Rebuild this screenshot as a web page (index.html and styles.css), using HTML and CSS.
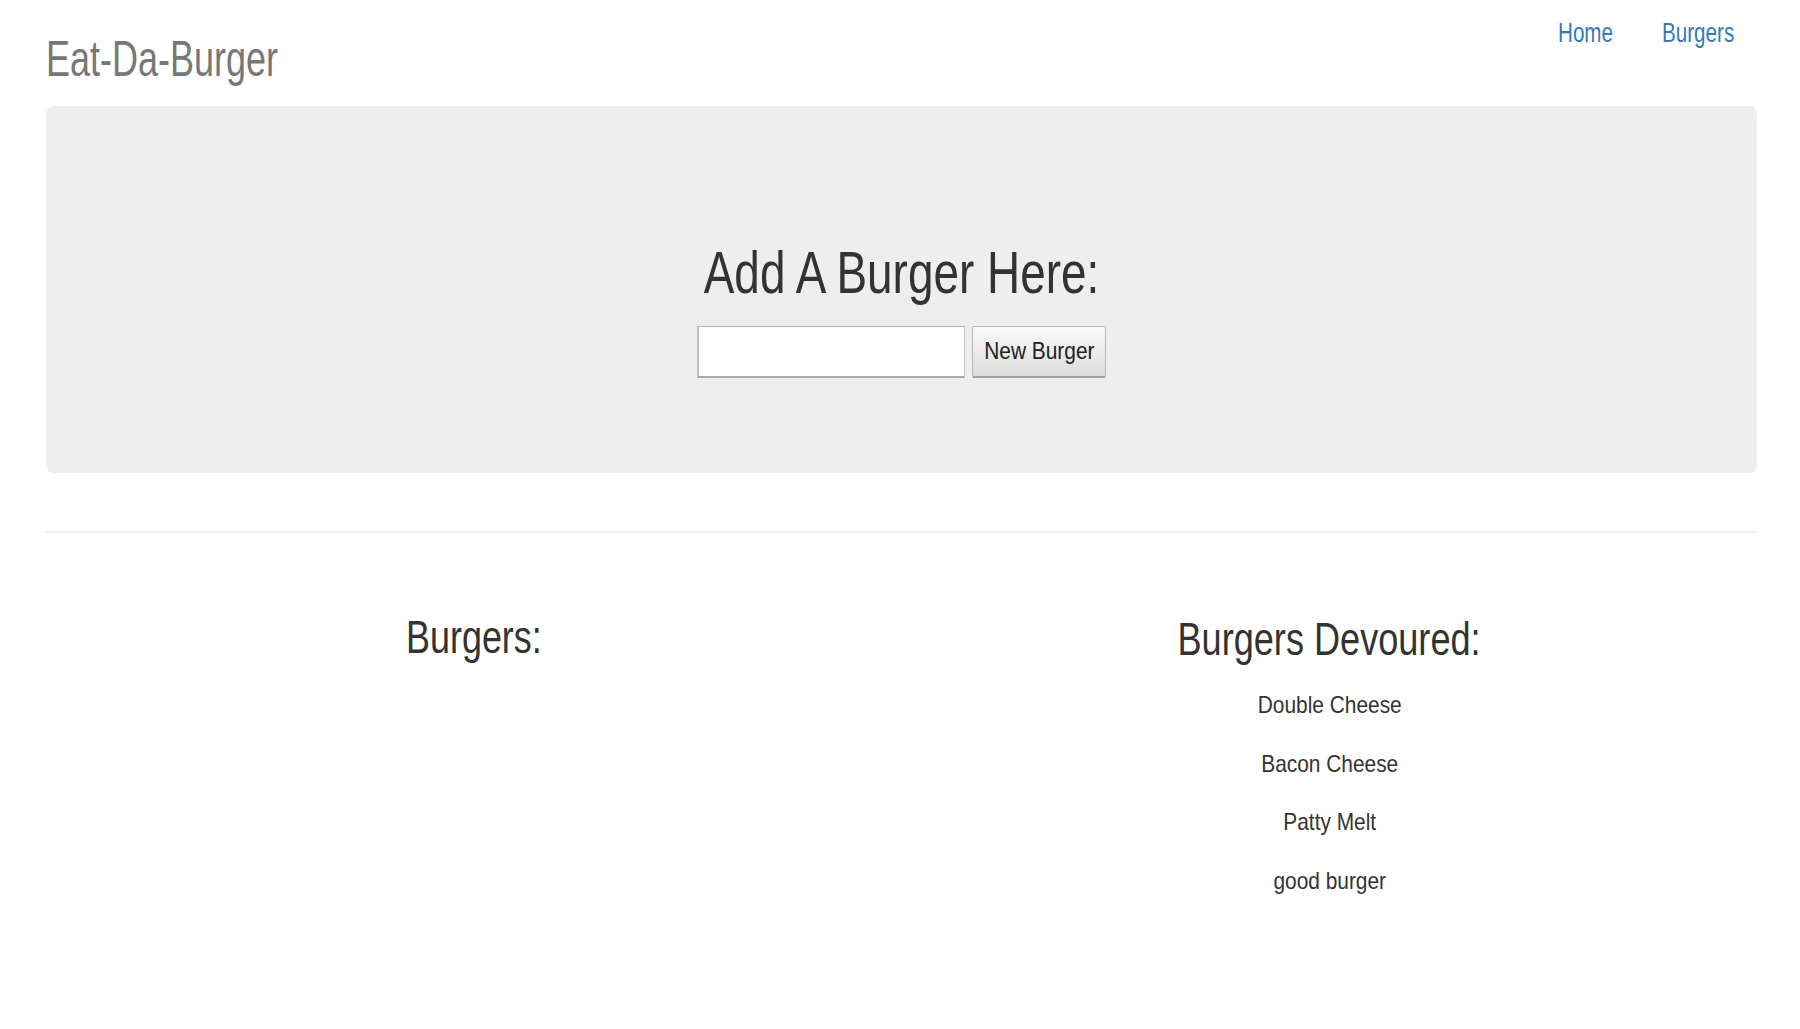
FILE: index.html
```html
<!DOCTYPE html>
<html lang="en">
<head>
<meta charset="utf-8">
<title>Eat-Da-Burger</title>
<link rel="stylesheet" href="styles.css">
</head>
<body>
<div class="container">
  <header class="header">
    <div class="brand"><span class="squeeze-l">Eat-Da-Burger</span></div>
    <nav class="nav">
      <a class="nav-link home" href="#"><span class="squeeze-l">Home</span></a>
      <a class="nav-link burgers" href="#"><span class="squeeze-l">Burgers</span></a>
    </nav>
  </header>

  <section class="jumbotron">
    <h1 class="jumbo-title"><span class="squeeze-c">Add A Burger Here:</span></h1>
    <form class="add-form">
      <input class="burger-input" type="text">
      <button class="burger-btn" type="button"><span class="squeeze-btn">New Burger</span></button>
    </form>
  </section>

  <hr class="divider">

  <div class="columns">
    <div class="col">
      <h2 class="col-title"><span class="squeeze-c">Burgers:</span></h2>
    </div>
    <div class="col">
      <h2 class="col-title devoured"><span class="squeeze-c">Burgers Devoured:</span></h2>
      <ul class="burger-list">
        <li>Double Cheese</li>
        <li>Bacon Cheese</li>
        <li>Patty Melt</li>
        <li>good burger</li>
      </ul>
    </div>
  </div>
</div>
</body>
</html>
```

FILE: styles.css
```css
* { box-sizing: border-box; }

body {
  margin: 0;
  background: #ffffff;
  color: #333333;
  font-family: "Liberation Sans", Arial, sans-serif;
}

.container {
  padding: 0 43px 0 46px;
}

.header {
  display: flex;
  justify-content: space-between;
  align-items: flex-start;
  height: 106px;
}

.brand {
  width: 232px;
  margin-top: 34px;
  font-size: 50px;
  line-height: 50px;
  color: #777777;
  white-space: nowrap;
}

.brand .squeeze-l { transform: scaleX(0.72); }

.squeeze-l {
  display: inline-block;
  transform-origin: left center;
  white-space: nowrap;
}

.squeeze-c {
  display: inline-block;
  transform-origin: center center;
  white-space: nowrap;
}

.nav {
  display: flex;
  gap: 49px;
  margin-top: 19px;
  margin-right: 23px;
}

.nav-link {
  flex: none;
  display: block;
  font-size: 27.5px;
  line-height: 28px;
  color: #337ab7;
  text-decoration: none;
  white-space: nowrap;
}

.nav-link .squeeze-l { transform: scaleX(0.75); }
.nav-link.home { width: 55px; }
.nav-link.burgers { width: 72px; }

.jumbotron {
  background: #eeeeee;
  border-radius: 6px / 10px;
  padding: 134px 0 95px;
  text-align: center;
}

.jumbo-title {
  margin: 0 0 20px;
  font-size: 60px;
  line-height: 66px;
  font-weight: normal;
  color: #333333;
}

.jumbo-title .squeeze-c { transform: scaleX(0.765); }

.add-form {
  display: flex;
  justify-content: center;
  gap: 7px;
  height: 52px;
}

.burger-input {
  width: 268px;
  height: 52px;
  margin: 0;
  background: #ffffff;
  border: 1px solid #c4c4c4;
  border-top-color: #b3b3b3;
  border-bottom: 2px solid #aaaaaa;
  border-left: 2px solid #bdbdbd;
}

.burger-btn {
  width: 134px;
  height: 52px;
  margin: 0;
  padding: 0;
  font-family: "Liberation Sans", Arial, sans-serif;
  font-size: 24px;
  line-height: 24px;
  color: #222222;
  background: linear-gradient(#f9f9f9, #dcdcdc);
  border: 1px solid #b8b8b8;
  border-bottom: 2px solid #a0a0a0;
  border-radius: 2px;
}

.squeeze-btn {
  display: inline-block;
  transform: scaleX(0.87);
  white-space: nowrap;
  padding-bottom: 1px;
}

.divider {
  margin: 58px 0 0;
  border: 0;
  border-top: 2px solid #eeeeee;
  height: 0;
}

.columns {
  display: grid;
  grid-template-columns: 1fr 1fr;
  padding-top: 79px;
  text-align: center;
}

.col-title {
  margin: 0;
  font-size: 46px;
  line-height: 50px;
  font-weight: normal;
  color: #333333;
}

.col-title .squeeze-c { transform: scaleX(0.78); }
.col-title.devoured { margin-top: 2px; }
.col-title.devoured .squeeze-c { transform: scaleX(0.785); }

.burger-list {
  list-style: none;
  margin: 12px 0 0;
  padding: 0;
}

.burger-list li {
  font-size: 24px;
  line-height: 58.7px;
  color: #333333;
  transform: scaleX(0.87);
  white-space: nowrap;
}
```
